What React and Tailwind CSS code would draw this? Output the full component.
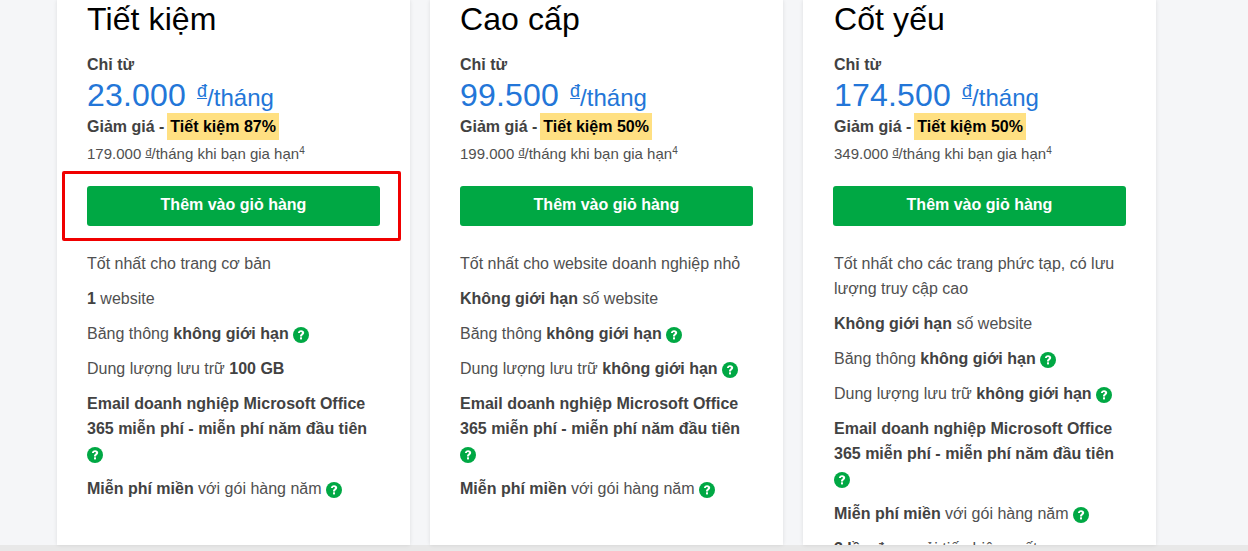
const PLANS = [
  {
    name: 'Tiết kiệm',
    price: '23.000',
    save: 'Tiết kiệm 87%',
    renew: '179.000',
    boxed: true,
    pad: 'pl-[30px]',
    features: [
      ['Tốt nhất cho trang cơ bản'],
      [<b key="b">1</b>, ' website'],
      ['Băng thông ', <b key="b">không giới hạn</b>, 'help'],
      ['Dung lượng lưu trữ ', <b key="b">100 GB</b>],
      [<b key="b">Email doanh nghiệp Microsoft Office 365 miễn phí - miễn phí năm đầu tiên</b>, 'help'],
      [<b key="b">Miễn phí miền</b>, ' với gói hàng năm', 'help'],
    ],
  },
  {
    name: 'Cao cấp',
    price: '99.500',
    save: 'Tiết kiệm 50%',
    renew: '199.000',
    pad: 'pl-[30px]',
    features: [
      ['Tốt nhất cho website doanh nghiệp nhỏ'],
      [<b key="b">Không giới hạn</b>, ' số website'],
      ['Băng thông ', <b key="b">không giới hạn</b>, 'help'],
      ['Dung lượng lưu trữ ', <b key="b">không giới hạn</b>, 'help'],
      [<b key="b">Email doanh nghiệp Microsoft Office 365 miễn phí - miễn phí năm đầu tiên</b>, 'help'],
      [<b key="b">Miễn phí miền</b>, ' với gói hàng năm', 'help'],
    ],
  },
  {
    name: 'Cốt yếu',
    price: '174.500',
    save: 'Tiết kiệm 50%',
    renew: '349.000',
    // text of this column sits 1px right of its button in the reference
    pad: 'pl-[31px]',
    btnPull: '-ml-[1px]',
    features: [
      ['Tốt nhất cho các trang phức tạp, có lưu lượng truy cập cao'],
      [<b key="b">Không giới hạn</b>, ' số website'],
      ['Băng thông ', <b key="b">không giới hạn</b>, 'help'],
      ['Dung lượng lưu trữ ', <b key="b">không giới hạn</b>, 'help'],
      [<b key="b">Email doanh nghiệp Microsoft Office 365 miễn phí - miễn phí năm đầu tiên</b>, 'help'],
      [<b key="b">Miễn phí miền</b>, ' với gói hàng năm', 'help'],
      [<b key="b">3 lần</b>, ' được cải tiến hiệu suất'],
    ],
  },
];

function HelpIcon() {
  return (
    <svg viewBox="0 0 16 16" className="inline-block w-4 h-4 align-[-4px]">
      <circle cx="8" cy="8" r="8" fill="#00a844" />
      <path d="M4.9 6.1C5 4.3 6.3 3.2 8.1 3.2c1.8 0 3.1 1 3.1 2.5 0 2.2-2.2 2.2-2.2 3.8H7c0-2.6 2-2.6 2-3.7 0-.5-.4-.8-1-.8-.7 0-1.1.4-1.1 1.1z" fill="#fff" />
      <rect x="7" y="10.3" width="2" height="2.1" fill="#fff" />
    </svg>
  );
}

function PlanCard({ plan }) {
  return (
    <div className={`w-[353px] h-[545px] shrink-0 overflow-hidden bg-white shadow-[0_0_4px_rgba(0,0,0,0.1)] pr-[30px] ${plan.pad}`}>
      <h2 className="text-[32px] leading-[38px] text-black tracking-[0.1px]">{plan.name}</h2>
      <p className="mt-[17px] text-[16px] leading-[20px] font-bold text-[#424242]">Chỉ từ</p>
      <div className="mt-[1px] h-[37px] flex items-baseline text-[#2376d8]">
        <span className="text-[32px] leading-[38px] tracking-[0.2px]">{plan.price}</span>
        <span className="ml-[11px] text-[18px] underline relative -top-[9px]">đ</span>
        <span className="text-[24px] leading-[38px]">/tháng</span>
      </div>
      <p className="h-[27px] flex items-center text-[16px] font-bold text-[#424242]">
        Giảm giá -
        <span className="ml-[3px] bg-[#ffe082] text-black px-[3px] leading-[27px]">{plan.save}</span>
      </p>
      <p className="mt-[2px] h-[24px] text-[15px] leading-[24px] text-[#505050]">
        {plan.renew} <span className="text-[11px] underline relative -top-[3px]">đ</span>/tháng khi bạn gia hạn
        <sup className="text-[10px]">4</sup>
      </p>
      <div className={`relative mt-[20px] ${plan.btnPull || ''}`}>
        {plan.boxed && (
          <div className="absolute -left-[25px] -top-[15px] w-[339px] h-[70px] border-[3px] border-[#f00000] rounded-[2px]" />
        )}
        <button className="w-[293px] h-[40px] pb-[3px] rounded-[3px] bg-[#00a844] text-white text-[16px] font-bold block">
          Thêm vào giỏ hàng
        </button>
      </div>
      <ul className="mt-[25px] text-[16px] leading-[25px] text-[#505050] space-y-[10px] [&_b]:text-[#424242]">
        {plan.features.map((f, i) => (
          <li key={i}>
            {f.map((part, j) => (part === 'help' ? <span key={j}> <HelpIcon /></span> : <span key={j}>{part}</span>))}
          </li>
        ))}
      </ul>
    </div>
  );
}

export default function App() {
  return (
    <div className="relative h-[551px] overflow-hidden bg-[#f5f6f8]" style={{ fontFamily: '"Liberation Sans", Arial, sans-serif' }}>
      <div className="flex gap-[20px] pl-[57px]">
        {PLANS.map((p) => (
          <PlanCard key={p.name} plan={p} />
        ))}
      </div>
      <div className="h-[6px] bg-[#e8e8e8]" />
    </div>
  );
}
